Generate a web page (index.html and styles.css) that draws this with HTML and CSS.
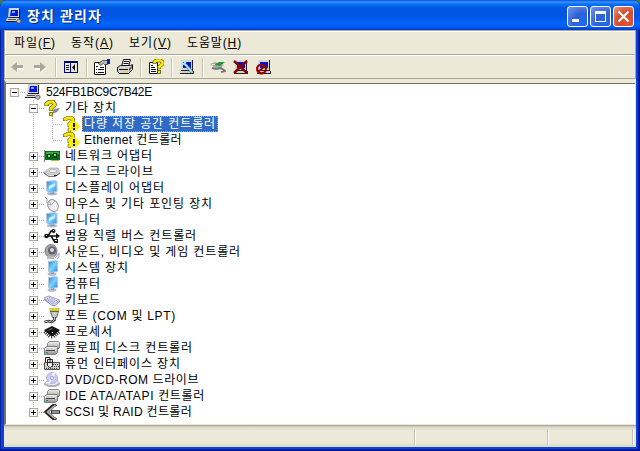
FILE: index.html
```html
<!DOCTYPE html>
<html lang="ko">
<head>
<meta charset="utf-8">
<title>장치 관리자</title>
<link rel="stylesheet" href="styles.css">
</head>
<body>
<svg class="defs" aria-hidden="true">
<defs>
<linearGradient id="screen" x1="0" y1="0" x2="1" y2="1"><stop offset="0" stop-color="#2478d8"/><stop offset=".5" stop-color="#7cd4ff"/><stop offset="1" stop-color="#2684df"/></linearGradient>
<linearGradient id="metal" x1="0" y1="0" x2="0" y2="1"><stop offset="0" stop-color="#f4f4f4"/><stop offset="1" stop-color="#8e8e92"/></linearGradient>
</defs>
<symbol id="pc" viewBox="0 0 16 16"><path fill="#d4d4dc" d="M3 0h10v9H2z"/><path fill="#0018d8" d="M5 2h7v6H4z"/><path fill="#5cb8ff" d="M6 3h3v2H6z"/><path fill="#222" d="M13 1h1v9h-1zM3 9h10v1H3z"/><path fill="#d8d8e0" d="M1 10h12v3H0z"/><path fill="#555" d="M2 11h8v1H2z"/><path fill="#222" d="M0 13h12v1H0z"/><path fill="#bbb" stroke="#444" stroke-width=".7" d="M12 11l3 1v2l-2 1.500-3-1.500z"/></symbol>
<symbol id="q" viewBox="0 0 16 16"><path fill="#888" d="M10 9l6-1-3 4-5 2z"/><path fill="none" stroke="#4a4600" stroke-width="4.200" d="M2.500 6V4L5 2h4l1.500 2v1L7 8.500V11"/><path fill="none" stroke="#f5e800" stroke-width="3" d="M2.500 5.500V4L5 2h4l1.500 2v1L7 8.500v2"/><path fill="#f5e800" stroke="#4a4600" stroke-width=".7" d="M5.500 12.500h3v3h-3z"/></symbol>
<symbol id="qe" viewBox="0 0 16 16"><path fill="none" stroke="#6a6430" stroke-width="4" d="M2 5V3.500L4.500 2h4L10 3.500v1L6.500 8v3"/><path fill="none" stroke="#f5e800" stroke-width="2.900" d="M2 4.500v-1L4.500 2h4L10 3.500v1L6.500 8v2.500"/><path fill="#f5e800" stroke="#6a6430" stroke-width=".6" d="M5 12h3v3.500H5z"/><circle cx="11" cy="10.500" r="5" fill="#fff000"/><path fill="#111" d="M10 7h2v4h-2zM10 12h2v2h-2z"/></symbol>
<symbol id="net" viewBox="0 0 16 16"><path fill="#087019" d="M1 3h15v9H1z"/><path fill="#35ad43" d="M2 4h13v2H2z"/><path fill="#043b10" d="M3 6h4v4H3zM9 5h4v5H9z"/><path fill="#90e293" d="M4 7h2v2H4zM10 6h2v2h-2z"/><path fill="#888" d="M0 2h1v12H0z"/><path fill="#b5b53a" d="M7 12h8v1H7z"/></symbol>
<symbol id="disk" viewBox="0 0 16 16"><path fill="#777" d="M0 8l5 4h6l5-4v2l-5 3H5l-5-3z"/><path fill="#d2d2d6" stroke="#aaa" stroke-width=".7" d="M.5 7.500L6 4h8l1.500 3-4 4h-6z"/><ellipse cx="9" cy="7" rx="4" ry="1.500" fill="#fff" stroke="#999" stroke-width=".7"/><path fill="#222" d="M10 11h3v1h-3z"/></symbol>
<symbol id="mon" viewBox="0 0 16 16"><ellipse cx="8" cy="13.800" rx="5" ry="1.700" fill="#b4b4d4"/><path fill="#8798b0" d="M6 11h4v3H6z"/><path fill="url(#screen)" stroke="#b9c6df" d="M2.500 1.500l9.500-1 1 1v10l-9 1-1.500-2z"/><path fill="#fff" opacity=".65" d="M5 6l6-3v3L5 9z"/></symbol>
<symbol id="sys" viewBox="0 0 16 16"><ellipse cx="8" cy="14" rx="4.500" ry="1.800" fill="#b5bcd0"/><path fill="#8c9aaf" d="M7 11h3v3H7z"/><path fill="url(#screen)" stroke="#b6c4da" d="M4.500 1.500l8-1 1 1v10l-8 1-1-1z"/></symbol>
<symbol id="mouse" viewBox="0 0 16 16"><path fill="none" stroke="#999" d="M3 7V3L1 1"/><ellipse cx="9" cy="9.500" rx="5" ry="6.200" transform="rotate(-30 9 9.500)" fill="#f2f2f6" stroke="#94949c"/><path fill="none" stroke="#aaa" d="M3 8l4 1 4-4M7 9L5 5"/></symbol>
<symbol id="usb" viewBox="0 0 16 16"><path fill="none" stroke="#111" stroke-width="1.500" d="M1 8h14M4 8l3-5h3M7 8l3 5h2"/><circle cx="2.500" cy="8" r="2.300" fill="#111"/><circle cx="9.500" cy="3" r="2" fill="#111"/><path fill="#111" d="M12 5l4 3-4 3zM10 11h4v4h-4z"/><path fill="#fff" d="M2 7h1v1H2zM9 2h1v1H9zM11 12h2v1h-2z"/></symbol>
<symbol id="sound" viewBox="0 0 16 16"><ellipse cx="7" cy="7" rx="6" ry="6.500" fill="#a7a7ad" stroke="#77777d"/><circle cx="8" cy="6.500" r="4" fill="#64646c"/><circle cx="8" cy="6" r="2" fill="#d9d9df"/><path fill="#b7b7bf" d="M3 12h7v3H3z"/><path fill="none" stroke="#9292cc" d="M13 9q1 3-2 5M15 9q1 4-2 6"/></symbol>
<symbol id="key" viewBox="0 0 16 16"><path fill="#8f8fbd" d="M0 6l8 7h3l5-5v2l-5 4H8L0 8z"/><path fill="#dedff1" stroke="#a7a7ce" d="M.5 5.500L5 4l10.500 4-5 4H8z"/><path stroke="#8585b8" stroke-dasharray="1 1" fill="none" d="M3 6l8 4M5 5l8 4M4 8l6 3"/></symbol>
<symbol id="port" viewBox="0 0 16 16"><path fill="#e9d92b" stroke="#aaa030" stroke-width=".7" d="M6 0h9v3H6z"/><path fill="#ccc" stroke="#444" stroke-width=".8" d="M6.500 3.500h8l-2 6h-4z"/><path fill="none" stroke="#222" stroke-width="2.500" d="M10.500 9v3l-3 2-3-1-4 1"/><path fill="none" stroke="#ccc" d="M10.500 9v3l-3 2-3-1-4 1"/></symbol>
<symbol id="cpu" viewBox="0 0 16 16"><path fill="none" stroke="#111" stroke-width="5" stroke-dasharray="1 1" d="M1 7l6 5h2l6-5"/><path fill="#111" d="M0 6l8-4 8 4-7 6H7z"/><path fill="#777" d="M4 6l4-2 1 .5-4 2z"/><path fill="#ddd" d="M8 8h1v1H8z"/></symbol>
<symbol id="drive" viewBox="0 0 16 16"><path fill="url(#metal)" stroke="#777" stroke-width=".9" d="M3.500 3.500l2-2h9l1 1v5l-2 2h-10z"/><path fill="url(#metal)" stroke="#777" stroke-width=".9" d="M.5 8.500l2-2h10l1 1v5l-2 2H.5z"/><path fill="#444" d="M2 10h9v1H2z"/><path fill="#13a42a" d="M2 12h2v1H2z"/></symbol>
<symbol id="hid" viewBox="0 0 16 16"><path fill="#ccc" stroke="#555" d="M.5 6.500h15v7H.5z"/><path stroke="#444" stroke-dasharray="1 1" d="M9 8.500h6M8 10.500h7M2 12.500h12"/><path fill="#eee" stroke="#222" d="M3.500 3.500h5v6l-2 2h-1l-2-2zM6 4v3M4 6.500h4M6 3V1.500H1.500V6"/></symbol>
<symbol id="dvd" viewBox="0 0 16 16"><path fill="#b0b0ba" d="M0 11l4-3h9l3 3v2l-5 2H5l-5-2z"/><path fill="#e9e9ef" d="M1 11l3-2h9l2 2-4 2H5z"/><circle cx="8" cy="6" r="5.500" fill="#c9cbf8" stroke="#aaaabd" stroke-width=".8"/><path fill="#fff" d="M8 1h3L9 6zM8 6l-2 5H4z"/><circle cx="8" cy="6" r="1.500" fill="#fff" stroke="#9292bc" stroke-width=".8"/></symbol>
<symbol id="scsi" viewBox="0 0 16 16"><path fill="none" stroke="#222" stroke-width="3.600" d="M12 0L9 2 2.500 8 9 14l3 2M7 8h9"/><path fill="none" stroke="#bbb" stroke-width="1.600" d="M11.500 1L9 3 3.500 8 9 13l2.500 2M8 8h7"/></symbol>
<symbol id="scanpc" viewBox="0 0 16 16"><path fill="#d6d6d6" d="M2 1h11v10H2z"/><path fill="#0010d8" d="M4 3h8v6H4z"/><path fill="#222" d="M13 1h1v10h-1zM2 11h12v1H2z"/><path fill="#d0d0d0" d="M1 12h13v2H1z"/><path fill="#222" d="M14 12h1v3H1v-1h13z"/></symbol>
</svg>

<div class="window">
  <header class="title">
    <svg class="icon"><use href="#pc"/></svg>
    <h1><span data-w="74">장치 관리자</span></h1>
    <div class="buttons">
      <button><svg viewBox="0 0 21 21"><path fill="#fff" d="M5 13h7v3H5z"/></svg></button>
      <button><svg viewBox="0 0 21 21"><path fill="#fff" d="M5 5h11v11H5zM6 8v7h9V8z" fill-rule="evenodd"/></svg></button>
      <button class="close"><svg viewBox="0 0 21 21"><path stroke="#fff" stroke-width="2.200" d="M5.500 5.500l10 10M15.500 5.500l-10 10"/></svg></button>
    </div>
  </header>
  <nav class="menu">
    <span class="m1" data-w="41">파일(<u>F</u>)</span>
    <span class="m2" data-w="42">동작(<u>A</u>)</span>
    <span class="m3" data-w="42">보기(<u>V</u>)</span>
    <span class="m4" data-w="54">도움말(<u>H</u>)</span>
  </nav>
  <div class="toolbar">
    <svg class="icon back" viewBox="0 0 16 16"><path fill="#fff" d="M2 9l6-5v3h6v4H8v3z"/><path fill="#aca899" d="M1 8l6-5v3h6v3H7v4z"/></svg>
    <svg class="icon fwd" viewBox="0 0 16 16"><path fill="#fff" d="M14 9L8 4v3H2v4h6v3z"/><path fill="#aca899" d="M13 8L7 3v3H1v3h6v4z"/></svg>
    <i class="sep first"></i>
    <svg class="icon" viewBox="0 0 16 16"><path fill="#00007b" d="M1 2h14v12H1z"/><path fill="#ece9d8" d="M2 4h5v9H2zM8 4h6v9H8z"/><path fill="#111" d="M3 6h3v1H3zM3 8h3v1H3zM3 10h3v1H3zM12 5v7L9 8.500z"/></svg>
    <i class="sep"></i>
    <svg class="icon" viewBox="0 0 16 16"><path fill="#fff" stroke="#111" d="M.5 3.500h11v12H.5z"/><path fill="#111" d="M2 7h2v1H2zM6 8h4v1H6zM2 10h1v1H2zM4 10h6v1H4zM2 13h1v1H2zM4 13h6v1H4z"/><path fill="#bbb" stroke="#333" stroke-width=".8" d="M4.500 4.500l4-3h5v4h-3l-1-1-3 2z"/><path fill="#002897" d="M13 0h3v5h-3z"/></svg>
    <svg class="icon printer" viewBox="0 0 16 16"><path fill="#fff" stroke="#111" d="M4.500 7.500l2-7h7l-2 7z"/><path stroke="#111" d="M7 2.500h5M6.500 4.500h5"/><path fill="#d3d3d3" stroke="#111" d="M.5 8.500l3-2h10l2-1v5l-4 4h-9l-2-2z"/><path fill="#111" d="M2 10h9v1H2zM12 10l3-3v1l-3 4z"/><path fill="#eeda00" d="M6 12h5v1H6z"/></svg>
    <i class="sep"></i>
    <svg class="icon" viewBox="0 0 16 16"><path fill="#fff" stroke="#111" d="M1.500 3.500h8v11h-8z"/><path stroke="#111" d="M3 6.500h2M3 8.500h4M3 10.500h5M3 12.500h5"/><path fill="none" stroke="#4a4600" stroke-width="3.600" d="M6.500 5V3l2-1.500h4l2 1.500v2L11 8v2"/><path fill="none" stroke="#ffef00" stroke-width="2.500" d="M6.500 4.500V3l2-1.500h4l2 1.500v2L11 8v1.500"/><path fill="#ffef00" stroke="#4a4600" stroke-width=".8" d="M9.500 11.500h3v3h-3z"/></svg>
    <i class="sep"></i>
    <svg class="icon" viewBox="0 0 16 16"><use href="#scanpc"/><path stroke="#174955" stroke-width="3" d="M6 5l7 8"/><path fill="none" stroke="#a3e6f4" stroke-width="2" d="M5 4l8 9M2 4l3 1 2-3"/></svg>
    <i class="sep"></i>
    <svg class="icon" viewBox="0 0 16 16"><path fill="#aaa" d="M0 5l5-2 9 3-5 4-4-1z"/><path fill="#1b9a28" d="M4 6l5-3h6l-5 4z"/><path fill="none" stroke="#777" stroke-width="2" d="M2 9l4 1 5-1 4 3-4 1"/><path fill="#eee" d="M2 5h3v1H2z"/></svg>
    <svg class="icon t9" viewBox="0 0 16 16"><use href="#scanpc"/><path stroke="#8b0000" stroke-width="2.400" d="M1 2l13 12M14 2L1 14"/></svg>
    <svg class="icon t10" viewBox="0 0 16 16"><use href="#scanpc"/><circle cx="5.500" cy="10" r="4.400" fill="none" stroke="#960000" stroke-width="2.200"/><path stroke="#960000" stroke-width="2" d="M2 13l7-6"/></svg>
  </div>
  <main class="tree">
    <div class="row root"><i class="box minus"></i><i class="dash"></i><svg class="icon"><use href="#pc"/></svg><span data-w="105">524FB1BC9C7B42E</span></div>
    <div class="branch">
      <div class="row"><i class="box minus"></i><i class="dash"></i><svg class="icon"><use href="#q"/></svg><span data-w="51">기타 장치</span></div>
      <div class="leaves">
        <div class="row leaf"><i class="dash"></i><svg class="icon"><use href="#qe"/></svg><b class="selected"><span data-w="131">다량 저장 공간 컨트롤러</span></b></div>
        <div class="row leaf"><i class="dash"></i><svg class="icon"><use href="#qe"/></svg><span data-w="97">Ethernet 컨트롤러</span></div>
      </div>
      <div class="row"><i class="box"></i><i class="dash"></i><svg class="icon"><use href="#net"/></svg><span data-w="87">네트워크 어댑터</span></div>
      <div class="row"><i class="box"></i><i class="dash"></i><svg class="icon"><use href="#disk"/></svg><span data-w="88">디스크 드라이브</span></div>
      <div class="row"><i class="box"></i><i class="dash"></i><svg class="icon"><use href="#mon"/></svg><span data-w="99">디스플레이 어댑터</span></div>
      <div class="row"><i class="box"></i><i class="dash"></i><svg class="icon"><use href="#mouse"/></svg><span data-w="147">마우스 및 기타 포인팅 장치</span></div>
      <div class="row"><i class="box"></i><i class="dash"></i><svg class="icon"><use href="#mon"/></svg><span data-w="35">모니터</span></div>
      <div class="row"><i class="box"></i><i class="dash"></i><svg class="icon"><use href="#usb"/></svg><span data-w="131">범용 직렬 버스 컨트롤러</span></div>
      <div class="row"><i class="box"></i><i class="dash"></i><svg class="icon"><use href="#sound"/></svg><span data-w="175">사운드, 비디오 및 게임 컨트롤러</span></div>
      <div class="row"><i class="box"></i><i class="dash"></i><svg class="icon"><use href="#sys"/></svg><span data-w="63">시스템 장치</span></div>
      <div class="row"><i class="box"></i><i class="dash"></i><svg class="icon"><use href="#sys"/></svg><span data-w="35">컴퓨터</span></div>
      <div class="row"><i class="box"></i><i class="dash"></i><svg class="icon"><use href="#key"/></svg><span data-w="35">키보드</span></div>
      <div class="row"><i class="box"></i><i class="dash"></i><svg class="icon"><use href="#port"/></svg><span data-w="110">포트 (COM 및 LPT)</span></div>
      <div class="row"><i class="box"></i><i class="dash"></i><svg class="icon"><use href="#cpu"/></svg><span data-w="47">프로세서</span></div>
      <div class="row"><i class="box"></i><i class="dash"></i><svg class="icon"><use href="#drive"/></svg><span data-w="127">플로피 디스크 컨트롤러</span></div>
      <div class="row"><i class="box"></i><i class="dash"></i><svg class="icon"><use href="#hid"/></svg><span data-w="115">휴먼 인터페이스 장치</span></div>
      <div class="row"><i class="box"></i><i class="dash"></i><svg class="icon"><use href="#dvd"/></svg><span data-w="133">DVD/CD-ROM 드라이브</span></div>
      <div class="row"><i class="box"></i><i class="dash"></i><svg class="icon"><use href="#drive"/></svg><span data-w="139">IDE ATA/ATAPI 컨트롤러</span></div>
      <div class="row"><i class="box"></i><i class="dash"></i><svg class="icon"><use href="#scsi"/></svg><span data-w="126">SCSI 및 RAID 컨트롤러</span></div>
    </div>
  </main>
  <footer class="status"><i></i><i></i><i></i></footer>
</div>
<script src="labels.js"></script>
</body>
</html>
```

FILE: styles.css
```css
* { box-sizing: border-box; }
body { margin: 0; overflow: hidden; background: #447c38; font: 12px/16px "Liberation Sans", "Noto Sans CJK KR", sans-serif; color: #000; }
.defs { position: absolute; width: 0; height: 0; }
svg { display: block; }
.icon { width: 16px; height: 16px; flex: none; }
.window { width: 640px; height: 451px; padding: 0 4px 4px; display: flex; flex-direction: column; border-radius: 7px 7px 0 0; background: #0743dc; box-shadow: inset 1px 0 #001ea0, inset -1px 0 #00138c, inset -2px 0 #001da0, inset 0 -1px #00138c, inset 0 -2px #001ea0; }
.title { height: 30px; flex: none; margin: 0 -4px; padding: 2px 6px 0; display: flex; align-items: center; border-radius: 7px 7px 0 0; background: linear-gradient(#0052d8 0, #3a91ff 2px, #0874f5 4px, #0055e3 8px, #0055e3 16px, #0064fb 23px, #005bf2 27px, #003cc8 30px); }
h1 { margin: 0 0 0 5px; font-size: 14px; line-height: 18px; font-weight: bold; color: #fff; text-shadow: 1px 1px #08298a; white-space: nowrap; }
.buttons { margin-left: auto; display: flex; gap: 2px; padding-top: 1px; }
button { width: 21px; height: 21px; padding: 0; border: 1px solid #fff; border-radius: 3px; background: radial-gradient(circle at 80% 85%, #2468ef, #2c61d8 45%, #7596ed 100%); overflow: hidden; }
button svg { width: 21px; height: 21px; margin: -1px; }
.close { background: radial-gradient(circle at 75% 80%, #e15432, #d34c2c 50%, #ef9a82 100%); }
.menu, .toolbar { flex: none; display: flex; align-items: center; background: #ece9d8; border: 1px solid #aca899; border-bottom-width: 0; box-shadow: inset 1px 1px #fff; white-space: nowrap; }
.menu { height: 24px; padding-left: 9px; }
.m1 { width: 57px; }
.m2, .m3 { width: 58px; }
.menu u { text-underline-offset: 1px; }
.toolbar { height: 25px; border-bottom-width: 1px; padding: 1px 0 0 5px; }
.fwd { margin-left: 7px; }
.printer, .t9, .t10 { margin-left: 7px; }
.sep { width: 2px; height: 19px; margin: 0 6px 0 7px; flex: none; background: linear-gradient(90deg, #c5c2b2 50%, #fff 50%); }
.first { margin-left: 6px; }
.tree { flex: none; height: 346px; padding: 1px 0 0 3px; background: #fff; border-top: 4px solid #ece9d8; border-left: 2px solid #77756a; border-right: 1px solid #ece9d8; border-bottom: 1px solid #ece9d8; box-shadow: inset 0 1px #716f64; }
.row { height: 16px; display: flex; align-items: flex-start; white-space: nowrap; }
.row > span, .selected { margin-left: 5px; }
.root { padding-left: 1px; }
.branch { padding-left: 20px; background: repeating-linear-gradient(#b4b2a8 0 1px, #fff 1px 2px) 24px 0 / 1px 312px no-repeat; }
.box { width: 9px; height: 9px; margin-top: 4px; flex: none; border: 1px solid #aca899; background: linear-gradient(#000, #000) center / 5px 1px no-repeat, linear-gradient(#000, #000) center / 1px 5px no-repeat, #fff; }
.minus { background: linear-gradient(#000, #000) center / 5px 1px no-repeat, #fff; }
.dash { width: 6px; height: 1px; margin-top: 8px; flex: none; background: repeating-linear-gradient(90deg, #fff 0 1px, #aaa 1px 2px); }
.leaves { padding-left: 23px; background: repeating-linear-gradient(#aaa 0 1px, #fff 1px 2px) 23px 0 / 1px 25px no-repeat; }
.leaf .dash { width: 11px; }
.selected { height: 16px; width: 136px; margin-left: 3px; padding-left: 1px; font-weight: inherit; line-height: 14px; color: #fff; background: #316ac5; border: 1px dotted #e59a3c; }
.status { flex: none; height: 22px; display: flex; background: linear-gradient(#8f8b7c 0, #c8c5b6 1px, #e1decd 3px, #ece9d8 6px, #ece9d8 17px, #dedac7 22px); }
.status i { width: 2px; height: 16px; margin-top: 4px; background: linear-gradient(90deg, #c3c0b1 50%, #fff 50%); }
.status i:nth-child(1) { margin-left: 410px; }
.status i:nth-child(2) { margin-left: 131px; }
.status i:nth-child(3) { margin-left: 83px; }
```

FILE: labels.js
```js
// Spread each label's letters so that it fills its nominal width.
document.querySelectorAll('[data-w]').forEach(function (el) {
  var range = document.createRange();
  range.selectNodeContents(el);
  var natural = range.getBoundingClientRect().width;
  var gaps = el.textContent.length;
  el.style.letterSpacing = ((Number(el.dataset.w) + 1 - natural) / gaps) + 'px';
});
```
